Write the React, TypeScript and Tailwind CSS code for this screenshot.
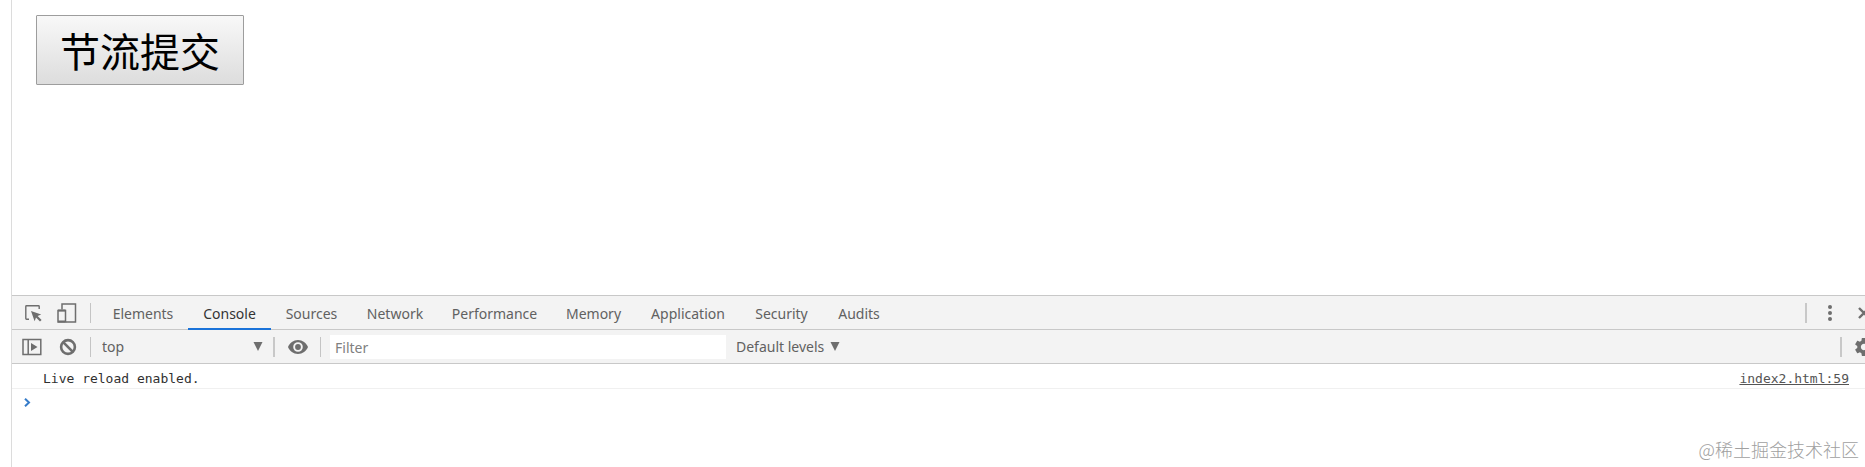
import React, { useState } from 'react';

const tabs = [
  { name: 'Elements', width: 'w-[90px]' },
  { name: 'Console', width: 'w-[83px]' },
  { name: 'Sources', width: 'w-[81px]' },
  { name: 'Network', width: 'w-[86px]' },
  { name: 'Performance', width: 'w-[113px]' },
  { name: 'Memory', width: 'w-[85px]' },
  { name: 'Application', width: 'w-[104px]' },
  { name: 'Security', width: 'w-[83px]' },
  { name: 'Audits', width: 'w-[72px]' },
];

function Divider() {
  return <span className="h-5 w-px shrink-0 bg-[#c4c4c4]" />;
}

function ThickDivider() {
  return <span className="h-5 w-0.5 shrink-0 bg-[#c8c8c8]" />;
}

function InspectIcon() {
  return (
    <svg width="18" height="18" viewBox="0 0 18 18" fill="none">
      <path d="M5 15.2H2.5Q1.8 15.2 1.8 14.5V2.5Q1.8 1.8 2.5 1.8H14.5Q15.2 1.8 15.2 2.5V5" stroke="#6e6e6e" strokeWidth="1.4" />
      <path d="M7 7L17.2 10.6L13.6 12L17.6 16L16 17.6L12 13.6L10.6 17.2Z" fill="#6e6e6e" />
    </svg>
  );
}

function DeviceIcon() {
  return (
    <svg width="20" height="20" viewBox="0 0 20 20" fill="none" stroke="#6e6e6e">
      <path d="M5 6.5V1H18.5V19H9" strokeWidth="1.5" />
      <rect x="1" y="7.5" width="7.5" height="11.5" strokeWidth="1.5" />
      <path d="M1 7.6H8.5M1 18.6H8.5" strokeWidth="2" />
    </svg>
  );
}

function SidebarIcon() {
  return (
    <svg width="20" height="18" viewBox="0 0 20 18" fill="none">
      <path d="M1 1.5H18.8V16.5H1ZM6.2 1.5V16.5" stroke="#6e6e6e" strokeWidth="1.5" />
      <path d="M9 5L15.5 9L9 13Z" fill="#6e6e6e" />
    </svg>
  );
}

function ClearIcon() {
  return (
    <svg width="18" height="18" viewBox="0 0 18 18" fill="none" stroke="#6e6e6e" strokeWidth="2.6">
      <circle cx="9" cy="9" r="6.9" />
      <path d="M4.2 4.2L13.8 13.8" />
    </svg>
  );
}

function EyeIcon() {
  return (
    <svg width="20" height="14" viewBox="0 0 20 14">
      <path
        fillRule="evenodd"
        fill="#6e6e6e"
        d="M10 0C5.5 0 1.6 2.9 0 7C1.6 11.1 5.5 14 10 14S18.4 11.1 20 7C18.4 2.9 14.5 0 10 0ZM10 11.8A4.8 4.8 0 1 1 10 2.2A4.8 4.8 0 0 1 10 11.8Z"
      />
      <circle cx="10" cy="7" r="2.9" fill="#6e6e6e" />
    </svg>
  );
}

function GearIcon() {
  return (
    <svg width="18" height="18" viewBox="2 2 20 20" fill="#6e6e6e">
      <path d="M19.43 12.98c.04-.32.07-.64.07-.98s-.03-.66-.07-.98l2.11-1.65c.19-.15.24-.42.12-.64l-2-3.46c-.12-.22-.39-.3-.61-.22l-2.49 1c-.52-.4-1.08-.73-1.69-.98l-.38-2.65C14.46 2.18 14.25 2 14 2h-4c-.25 0-.46.18-.49.42l-.38 2.65c-.61.25-1.17.59-1.69.98l-2.49-1c-.23-.09-.49 0-.61.22l-2 3.46c-.13.22-.07.49.12.64l2.11 1.65c-.04.32-.07.65-.07.98s.03.66.07.98l-2.11 1.65c-.19.15-.24.42-.12.64l2 3.46c.12.22.39.3.61.22l2.49-1c.52.4 1.08.73 1.69.98l.38 2.65c.03.24.24.42.49.42h4c.25 0 .46-.18.49-.42l.38-2.65c.61-.25 1.17-.59 1.69-.98l2.49 1c.23.09.49 0 .61-.22l2-3.46c.12-.22.07-.49-.12-.64l-2.11-1.65zM12 15.5c-1.93 0-3.5-1.57-3.5-3.5s1.57-3.5 3.5-3.5 3.5 1.57 3.5 3.5-1.57 3.5-3.5 3.5z" />
    </svg>
  );
}

function Triangle() {
  return (
    <svg width="10" height="9" viewBox="0 0 10 9" className="pointer-events-none shrink-0">
      <path d="M0.5 0H9.5L5 9Z" fill="#6e6e6e" />
    </svg>
  );
}

export default function App() {
  const [active, setActive] = useState('Console');
  const [filter, setFilter] = useState('');

  return (
    <div className="relative h-screen overflow-hidden bg-white pl-[11px] font-['Noto_Sans','Noto_Sans_CJK_SC',sans-serif]">
      <div className="flex h-full flex-col border-l border-[#dcdcdc]">
        {/* Page */}
        <main className="flex-1 px-6 pt-[15px]">
          <button
            type="button"
            className="flex h-[70px] items-center rounded-[1px] border border-[#9d9d9d] bg-linear-to-b from-[#f8f8f8] to-[#dddddd] px-[23px] font-['Noto_Sans_CJK_SC',sans-serif] text-[40px] leading-none text-black"
          >
            节流提交
          </button>
        </main>

        {/* DevTools */}
        <section className="h-[172px] shrink-0 border-t border-[#c8c8c8] text-sm text-[#616161]">
          <div className="flex h-[34px] items-center border-b border-[#c8c8c8] bg-[#f3f3f3]">
            <button type="button" aria-label="Inspect element" className="ml-3 shrink-0">
              <InspectIcon />
            </button>
            <button type="button" aria-label="Toggle device toolbar" className="mr-[13px] ml-[15px] shrink-0">
              <DeviceIcon />
            </button>
            <Divider />
            <nav className="ml-[7px] flex h-full">
              {tabs.map((tab) => (
                <button
                  key={tab.name}
                  type="button"
                  onClick={() => setActive(tab.name)}
                  className={`-mb-px flex shrink-0 items-center justify-center border-b-2 pt-1 ${tab.width} ${
                    active === tab.name ? 'border-[#1a73d9] text-[#333]' : 'border-transparent'
                  }`}
                >
                  {tab.name}
                </button>
              ))}
            </nav>
            <div className="-mr-3 ml-auto flex shrink-0 items-center">
              <ThickDivider />
              <button type="button" aria-label="More options" className="mr-[25px] ml-5">
                <svg width="6" height="18" viewBox="0 0 6 18" fill="#6e6e6e">
                  <circle cx="3" cy="3" r="2" />
                  <circle cx="3" cy="9" r="2" />
                  <circle cx="3" cy="15" r="2" />
                </svg>
              </button>
              <button type="button" aria-label="Close" className="mr-[7px]">
                <svg width="12" height="12" viewBox="0 0 12 12" stroke="#6e6e6e" strokeWidth="2.4">
                  <path d="M1 1L11 11M11 1L1 11" />
                </svg>
              </button>
            </div>
          </div>

          <div className="flex h-[34px] items-center border-b border-[#c8c8c8] bg-[#f3f3f3]">
            <button type="button" aria-label="Show console sidebar" className="ml-2.5 shrink-0">
              <SidebarIcon />
            </button>
            <button type="button" aria-label="Clear console" className="mr-[13px] ml-[17px] shrink-0">
              <ClearIcon />
            </button>
            <Divider />
            <div className="ml-[11px] flex w-[161px] shrink-0 items-center">
              <select aria-label="Context" className="flex-1 appearance-none bg-transparent">
                <option>top</option>
              </select>
              <Triangle />
            </div>
            <span className="ml-2.5 flex">
              <ThickDivider />
            </span>
            <button type="button" aria-label="Live expression" className="mr-3 ml-[13px] shrink-0">
              <EyeIcon />
            </button>
            <Divider />
            <input
              type="text"
              aria-label="Filter"
              placeholder="Filter"
              value={filter}
              onChange={(e) => setFilter(e.target.value)}
              className="ml-[9px] h-6 w-[396px] bg-white pt-0.5 pl-[5px] outline-none placeholder:text-[#808080]"
            />
            <button type="button" className="ml-2.5 flex shrink-0 items-center gap-1.5">
              Default levels <Triangle />
            </button>
            <div className="-mr-2 ml-auto flex shrink-0 items-center gap-[13px]">
              <ThickDivider />
              <button type="button" aria-label="Settings">
                <GearIcon />
              </button>
            </div>
          </div>

          <div className="flex h-[25px] items-center justify-between border-b border-[#f0f0f0] pt-1.5 pr-4 pl-[31px] font-['DejaVu_Sans_Mono',monospace] text-[13px]">
            <span className="text-[#303030]">Live reload enabled.</span>
            <a href="#index2" className="text-[#545454] underline">
              index2.html:59
            </a>
          </div>
          <div className="flex h-[26px] items-center pl-3">
            <svg width="7" height="9" viewBox="0 0 7 9" fill="none" stroke="#367cc9" strokeWidth="2">
              <path d="M1 0.7L5 4.5L1 8.3" />
            </svg>
          </div>
        </section>
      </div>

      <span className="absolute right-1.5 bottom-1 font-['Noto_Sans_CJK_SC',sans-serif] text-lg font-light text-[#a0a0a0]">
        @稀土掘金技术社区
      </span>
    </div>
  );
}
